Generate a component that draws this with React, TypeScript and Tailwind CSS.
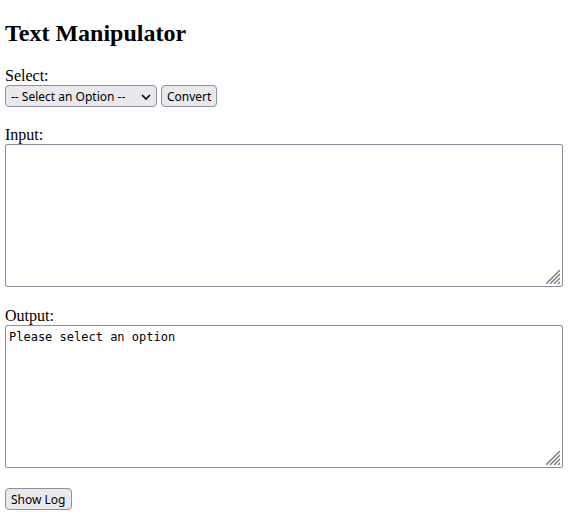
import { useState } from "react";

const control =
  "h-[22px] rounded-[4px] border border-[#8f8f9d] bg-[#e9e9ed] pt-px font-['Noto_Sans','Open_Sans',sans-serif] text-[12px] leading-[20px] text-black";

const area =
  "block h-[143px] w-full resize-none rounded-[2px] border border-[#8f8f9d] bg-white px-[3px] py-[5px] font-['DejaVu_Sans_Mono',monospace] text-[12px] leading-[13px] text-black";

function Grip() {
  return (
    <svg
      aria-hidden="true"
      className="pointer-events-none absolute right-[3px] bottom-[3px] h-[14px] w-[14px]"
      viewBox="0 0 14 14"
      stroke="#777777"
      strokeWidth="1.4"
      fill="none"
    >
      <path d="M0 14 14 0M4 14 14 4M8 14 14 8M12 14 14 12" />
    </svg>
  );
}

export default function App() {
  const [option, setOption] = useState("");
  const [input, setInput] = useState("");
  const [output, setOutput] = useState("Please select an option");

  function convert() {
    if (option === "upper") setOutput(input.toUpperCase());
    else if (option === "lower") setOutput(input.toLowerCase());
    else setOutput("Please select an option");
  }

  return (
    <main className="bg-white pt-5 pr-3.5 pb-5 pl-[5px] font-['Liberation_Serif',serif] text-[16px] leading-[18px] text-black">
      <h1 className="mb-5 text-[24px] leading-[27px] font-bold">Text Manipulator</h1>

      <label htmlFor="option" className="block">Select:</label>
      <div className="mb-[19px] flex gap-1">
        <div className="relative">
          <select
            id="option"
            value={option}
            onChange={(e) => setOption(e.target.value)}
            className={`${control} w-[152px] appearance-none pl-[5px]`}
          >
            <option value="">-- Select an Option --</option>
            <option value="upper">Uppercase</option>
            <option value="lower">Lowercase</option>
          </select>
          <svg
            aria-hidden="true"
            className="pointer-events-none absolute top-[9px] right-[6px] h-[6px] w-[10px]"
            viewBox="0 0 10 6"
            fill="none"
            stroke="black"
            strokeWidth="1.6"
          >
            <path d="M1 1 5 5 9 1" />
          </svg>
        </div>
        <button type="button" onClick={convert} className={`${control} px-[5px]`}>
          Convert
        </button>
      </div>

      <label htmlFor="input" className="block">Input:</label>
      <div className="relative mb-5">
        <textarea id="input" value={input} onChange={(e) => setInput(e.target.value)} className={area} />
        <Grip />
      </div>

      <label htmlFor="output" className="block">Output:</label>
      <div className="relative mb-5">
        <textarea id="output" value={output} readOnly className={area} />
        <Grip />
      </div>

      <button type="button" className={`${control} block px-[5px]`}>
        Show Log
      </button>
    </main>
  );
}
